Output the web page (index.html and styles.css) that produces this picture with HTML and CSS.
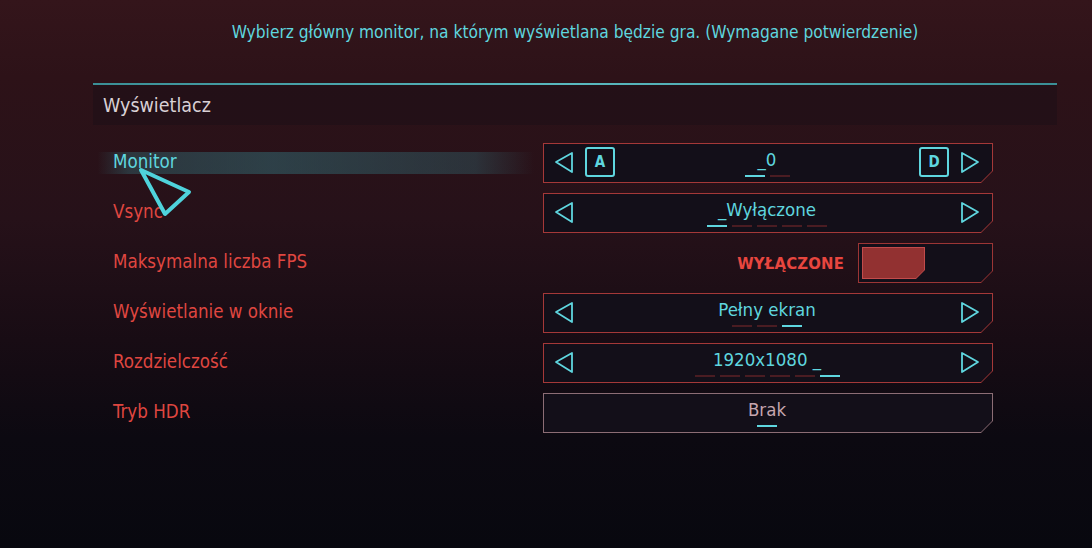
FILE: index.html
```html
<!DOCTYPE html>
<html lang="pl">
<head>
<meta charset="utf-8">
<title>Wyświetlacz</title>
<link rel="stylesheet" href="styles.css">
</head>
<body>
<div class="screen">
  <div class="panel">
    <div class="hint">Wybierz główny monitor, na którym wyświetlana będzie gra. (Wymagane potwierdzenie)</div>
    <div class="divider"></div>
    <div class="section-head">Wyświetlacz</div>
    <div class="rows">
      <div class="row active">
        <div class="label">Monitor</div>
        <div class="ctl"><div class="ctl-in">
          <svg class="arr" viewBox="0 0 20 22"><polygon points="2,11 18,2 18,21" /></svg>
          <span class="key">A</span>
          <div class="val"><span class="txt">_0</span><span class="dashes"><i class="on"></i><i></i></span></div>
          <span class="key">D</span>
          <svg class="arr" viewBox="0 0 20 22"><polygon points="2,2 2,21 18,11" /></svg>
        </div></div>
      </div>
      <div class="row">
        <div class="label">Vsync</div>
        <div class="ctl"><div class="ctl-in">
          <svg class="arr" viewBox="0 0 20 22"><polygon points="2,11 18,2 18,21" /></svg>
          <div class="val"><span class="txt">_Wyłączone</span><span class="dashes"><i class="on"></i><i></i><i></i><i></i><i></i></span></div>
          <svg class="arr" viewBox="0 0 20 22"><polygon points="2,2 2,21 18,11" /></svg>
        </div></div>
      </div>
      <div class="row">
        <div class="label">Maksymalna liczba FPS</div>
        <div class="toggle-wrap">
          <span class="toggle-txt">WYŁĄCZONE</span>
          <div class="ctl toggle"><div class="ctl-in"><div class="fill"><div class="fill-in"></div></div></div></div>
        </div>
      </div>
      <div class="row">
        <div class="label">Wyświetlanie w oknie</div>
        <div class="ctl"><div class="ctl-in">
          <svg class="arr" viewBox="0 0 20 22"><polygon points="2,11 18,2 18,21" /></svg>
          <div class="val"><span class="txt">Pełny ekran</span><span class="dashes"><i></i><i></i><i class="on"></i></span></div>
          <svg class="arr" viewBox="0 0 20 22"><polygon points="2,2 2,21 18,11" /></svg>
        </div></div>
      </div>
      <div class="row">
        <div class="label">Rozdzielczość</div>
        <div class="ctl"><div class="ctl-in">
          <svg class="arr" viewBox="0 0 20 22"><polygon points="2,11 18,2 18,21" /></svg>
          <div class="val"><span class="txt">1920x1080 _</span><span class="dashes"><i></i><i></i><i></i><i></i><i></i><i class="on"></i></span></div>
          <svg class="arr" viewBox="0 0 20 22"><polygon points="2,2 2,21 18,11" /></svg>
        </div></div>
      </div>
      <div class="row">
        <div class="label">Tryb HDR</div>
        <div class="ctl grey"><div class="ctl-in">
          <div class="val"><span class="txt">Brak</span><span class="dashes"><i class="on"></i></span></div>
        </div></div>
      </div>
    </div>
  </div>
  <svg class="cursor" viewBox="0 0 60 52" width="60" height="52"><polygon points="5,4 53,26 29,48" /></svg>
</div>
</body>
</html>
```
FILE: styles.css
```css
html, body {
  margin: 0;
  padding: 0;
}
body {
  font-family: "DejaVu Sans Condensed", "DejaVu Sans", sans-serif;
  font-stretch: condensed;
  background: #08080f;
}
.screen {
  position: relative;
  width: 1092px;
  height: 548px;
  overflow: hidden;
  background: linear-gradient(180deg, #34151b 0%, #2d1218 14%, #261119 40%, #180c14 62%, #0c0911 80%, #08080f 100%);
}
.panel {
  margin-left: 93px;
  width: 964px;
}
.hint {
  padding-top: 21px;
  height: 22px;
  line-height: 22px;
  margin-bottom: 40px;
  text-align: center;
  color: #5fd6df;
  font-size: 17.2px;
}
.divider {
  height: 2px;
  background: linear-gradient(90deg, #3b8f96 0%, #5ab9bf 50%, #3b8f96 100%);
}
.section-head {
  height: 40px;
  line-height: 42px;
  padding-left: 10px;
  font-size: 19.5px;
  color: #d9d0d5;
  background: rgba(20, 13, 24, 0.35);
}
.rows {
  margin-top: 18px;
  display: flex;
  flex-direction: column;
  gap: 10px;
}
.row {
  height: 40px;
  display: flex;
  align-items: center;
}
.label {
  width: 430px;
  padding-left: 20px;
  height: 40px;
  line-height: 38px;
  font-size: 18.6px;
  color: #df4640;
}
.row.active .label {
  color: #5fd6df;
  background: linear-gradient(90deg, rgba(50,110,118,0) 1%, rgba(50,110,118,0.4) 8%, rgba(50,110,118,0.5) 40%, rgba(50,110,118,0.35) 85%, rgba(50,110,118,0) 98%) no-repeat center 9px / 100% 22px;
}
.ctl {
  width: 450px;
  height: 40px;
  padding: 1px;
  box-sizing: border-box;
  background: #a53838;
  clip-path: polygon(0 0, 100% 0, 100% calc(100% - 12px), calc(100% - 12px) 100%, 0 100%);
}
.ctl.grey {
  background: #8c6d75;
}
.ctl-in {
  height: 100%;
  background: #130f19;
  clip-path: polygon(0 0, 100% 0, 100% calc(100% - 11px), calc(100% - 11px) 100%, 0 100%);
  display: flex;
  align-items: center;
  padding: 0 12px 0 10px;
  box-sizing: border-box;
  gap: 11px;
}
.arr {
  width: 20px;
  height: 22px;
  flex: none;
  margin-top: -2px;
}
.arr polygon {
  fill: none;
  stroke: #5fd6df;
  stroke-width: 1.8;
  stroke-linejoin: round;
}
.key {
  flex: none;
  width: 26px;
  height: 26px;
  border: 2px solid #5fd6df;
  border-radius: 3px;
  color: #5fd6df;
  font-size: 15px;
  font-weight: bold;
  text-align: center;
  line-height: 26px;
  margin-top: -2px;
}
.val {
  flex: 1;
  display: flex;
  flex-direction: column;
  align-items: center;
  color: #5fd6df;
  font-size: 18.5px;
}
.ctl.grey .val {
  color: #c6a6ae;
}
.txt {
  line-height: 22px;
  margin-top: -1px;
}
.dashes {
  display: flex;
  gap: 5px;
  margin-top: 4px;
}
.dashes i {
  display: block;
  width: 20px;
  height: 2px;
  background: #4a1c22;
}
.dashes i.on {
  background: #5fd6df;
}
.toggle-wrap {
  width: 450px;
  display: flex;
  justify-content: flex-end;
  align-items: center;
  gap: 14px;
}
.toggle-txt {
  color: #e8463f;
  font-size: 16.5px;
  font-weight: bold;
  letter-spacing: 0.2px;
}
.ctl.toggle {
  width: 135px;
  background: #9c3535;
}
.toggle .ctl-in {
  padding: 3px;
  align-items: stretch;
}
.fill {
  width: 61px;
  padding: 1px;
  background: #c24b4b;
  clip-path: polygon(0 0, 100% 0, 100% calc(100% - 9px), calc(100% - 9px) 100%, 0 100%);
}
.fill-in {
  height: 100%;
  background: #923131;
  clip-path: polygon(0 0, 100% 0, 100% calc(100% - 8px), calc(100% - 8px) 100%, 0 100%);
}
.cursor {
  position: absolute;
  left: 136px;
  top: 166px;
}
.cursor polygon {
  fill: none;
  stroke: #4fd3dc;
  stroke-width: 4;
  stroke-linejoin: round;
}
```
